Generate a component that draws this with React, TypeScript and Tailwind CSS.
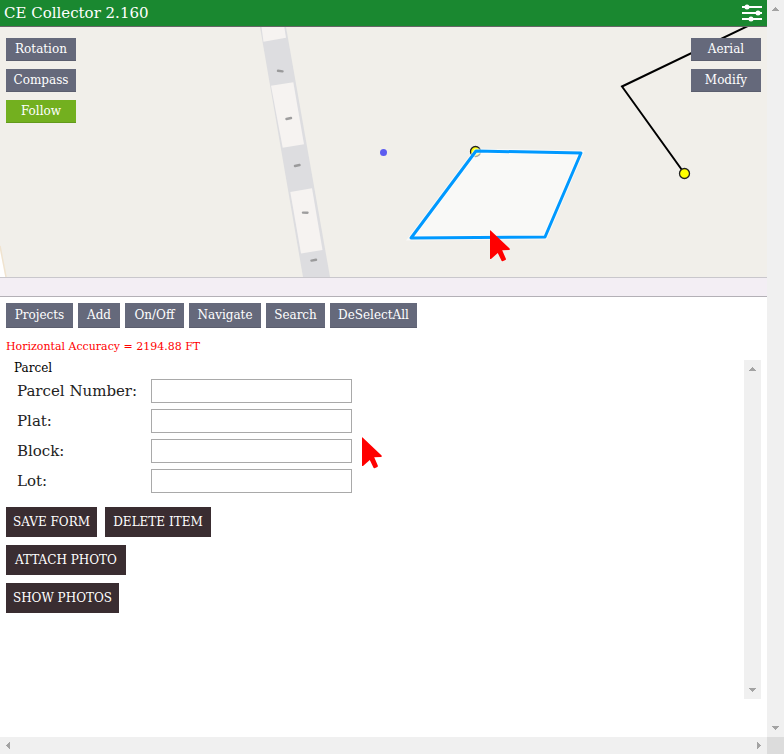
import React from 'react';
import clsx from 'clsx';

const tools = [
  { label: 'Projects', width: 'w-[67px]' },
  { label: 'Add', width: 'w-[42px]' },
  { label: 'On/Off', width: 'w-[59px]' },
  { label: 'Navigate', width: 'w-[72px]' },
  { label: 'Search', width: 'w-[59px]' },
  { label: 'DeSelectAll', width: 'w-[87px]' },
];

const fields = [
  { id: 'parcel-number', label: 'Parcel Number:' },
  { id: 'plat', label: 'Plat:' },
  { id: 'block', label: 'Block:' },
  { id: 'lot', label: 'Lot:' },
];

const POINTER = 'M0 .5Q0 0 .6 .4L19.6 18.6Q20.4 19.8 19 20L12.2 20.3L15.8 28.6Q16.2 29.6 15.4 30L12.6 31.2Q11.8 31.4 11.4 30.6L7.8 23L1 29Q0 29.4 0 28.4Z';

function MapButton({ children, active }: { children: React.ReactNode; active?: boolean }) {
  return (
    <button
      type="button"
      className={clsx(
        'h-[23px] w-[70px] border-b text-xs leading-[21px] text-white',
        active ? 'border-[#629a1b] bg-[#73b01f]' : 'border-[#5b5e6e] bg-[#65697b]'
      )}
    >
      {children}
    </button>
  );
}

function FormButton({ children, width }: { children: React.ReactNode; width: string }) {
  return (
    <button type="button" className={clsx('h-[30px] whitespace-nowrap bg-[#3a2d31] text-xs text-white', width)}>
      {children}
    </button>
  );
}

function Arrow({ className }: { className?: string }) {
  return (
    <svg viewBox="0 0 7 7" className={clsx('size-[7px] shrink-0', className)} shapeRendering="crispEdges" aria-hidden="true">
      <path d="M3 1h1v1h1v1h1v1h1v1H0V4h1V3h1V2h1z" fill="#a3a3a3" />
    </svg>
  );
}

function VerticalBar() {
  return (
    <div className="flex w-[17px] shrink-0 flex-col items-center justify-between bg-[#f0f0f0] py-1.5">
      <Arrow />
      <Arrow className="rotate-180" />
    </div>
  );
}

function MapView() {
  return (
    <svg className="h-full w-full" viewBox="0 27 767 250" preserveAspectRatio="xMinYMin slice" role="img" aria-label="Map">
      {/* road */}
      <path d="M260 27L303 277H330L286 27Z" fill="#dddde0" />
      <g fill="#f6f3f1">
        <path d="M261.5 27L263.5 41.7L286 37.7L284.3 27Z" />
        <path d="M271 85.7L293.3 82.3L304 144.3L282.7 147.7Z" />
        <path d="M290.3 192L312 188.3L322.5 250L301 253.5Z" />
      </g>
      <g stroke="#8f8f90" strokeWidth="2.4" strokeLinecap="round" opacity=".85">
        <path d="M278 70.8l4.500 .6M286.500 119l4.500-1M295 166l4.500-1M303 212.600l4.500 .2M311.500 260.600l4.500-.8" />
      </g>
      <path d="M0 246L6 277H0Z" fill="#fff" />
      <path d="M0 246L6 277" stroke="#f0e3cf" strokeWidth="1.500" />

      {/* line feature */}
      <path d="M752 24L622 86.500L684.500 173.500" fill="none" stroke="#000" strokeWidth="2" />
      <circle cx="684.500" cy="173.500" r="5" fill="#ff0" stroke="#222" strokeWidth="1.300" />
      <circle cx="383.500" cy="152.500" r="3.500" fill="#5c5cf0" />

      {/* selected parcel */}
      <circle cx="475.500" cy="151.500" r="5" fill="#ff0" stroke="#222" strokeWidth="1.300" />
      <path d="M476 151L581 153L545 237L411 238Z" fill="#fff" fillOpacity=".6" stroke="#fff" strokeOpacity=".6" strokeWidth="5" />
      <path d="M476 151L581 153L545 237L411 238Z" fill="none" stroke="#0099ff" strokeWidth="3" strokeLinejoin="round" />
      <path d={POINTER} transform="translate(490 230)" fill="#f00" />
    </svg>
  );
}

export default function App() {
  return (
    <div className="flex h-screen flex-col bg-white font-['DejaVu_Serif',serif] text-black">
      <div className="flex min-h-0 flex-1">
        <main className="flex min-w-0 flex-1 flex-col">
          <header className="flex h-[27px] shrink-0 items-center justify-between border-b border-[#666] bg-[#1a8830] pl-1 pr-[5px]">
            <h1 className="text-[15px] leading-6 text-white">CE Collector 2.160</h1>
            <button type="button" aria-label="Settings">
              <svg viewBox="0 0 20 18" className="h-[18px] w-5" fill="#fff">
                <path d="M0 2h20v2H0zM0 8h20v2H0zM0 14h20v2H0z" />
                <circle cx="5" cy="3" r="2.500" />
                <circle cx="16" cy="9" r="2.500" />
                <circle cx="9" cy="15" r="2.500" />
              </svg>
            </button>
          </header>

          <section className="relative h-[251px] shrink-0 overflow-hidden border-b border-[#c9c7cc] bg-[#f1efea]">
            <MapView />
            <div className="absolute left-1.5 top-[11px] flex flex-col gap-2">
              <MapButton>Rotation</MapButton>
              <MapButton>Compass</MapButton>
              <MapButton active>Follow</MapButton>
            </div>
            <div className="absolute right-1.5 top-[11px] flex flex-col gap-2">
              <MapButton>Aerial</MapButton>
              <MapButton>Modify</MapButton>
            </div>
          </section>

          <div className="h-[19px] shrink-0 border-b border-[#b3b0b6] bg-[#f3eef4]" />

          <nav className="flex gap-[5px] px-1.5 pt-1.5">
            {tools.map((tool) => (
              <button
                key={tool.label}
                type="button"
                className={clsx('h-[25px] border-b border-[#5b5e6e] bg-[#65697b] text-xs leading-6 text-white', tool.width)}
              >
                {tool.label}
              </button>
            ))}
          </nav>

          <p className="mt-2.5 px-1.5 text-[11px] leading-[18px] text-[#f00]">Horizontal Accuracy = 2194.88 FT</p>

          <section className="mx-1.5 mb-[38px] mt-1 flex min-h-0 flex-1">
            <form className="relative min-w-0 flex-1">
              <h2 className="pl-2 text-xs leading-4">Parcel</h2>
              <div className="mt-[3px] flex flex-col gap-1.5 pl-[11px]">
                {fields.map((field) => (
                  <div key={field.id} className="flex items-center">
                    <label htmlFor={field.id} className="w-[134px] text-[15px] leading-6 text-[#222]">
                      {field.label}
                    </label>
                    <input id={field.id} type="text" className="h-6 w-[201px] border border-[#a9a9a9] bg-white px-1" />
                  </div>
                ))}
              </div>
              <div className="mt-3.5 flex flex-col items-start gap-2">
                <div className="flex gap-2">
                  <FormButton width="w-[91px]">SAVE FORM</FormButton>
                  <FormButton width="w-[106px]">DELETE ITEM</FormButton>
                </div>
                <FormButton width="w-[120px]">ATTACH PHOTO</FormButton>
                <FormButton width="w-[113px]">SHOW PHOTOS</FormButton>
              </div>
              <svg viewBox="0 0 21 32" className="absolute left-[356px] top-[77px] h-8 w-[21px]" aria-hidden="true">
                <path d={POINTER} fill="#f00" />
              </svg>
            </form>
            <VerticalBar />
          </section>
        </main>
        <VerticalBar />
      </div>

      <div className="flex h-[17px] shrink-0 bg-[#f0f0f0]">
        <div className="flex flex-1 items-center justify-between px-[5px]">
          <Arrow className="-rotate-90" />
          <Arrow className="rotate-90" />
        </div>
        <div className="w-[17px] bg-[#dcdcdc]" />
      </div>
    </div>
  );
}
